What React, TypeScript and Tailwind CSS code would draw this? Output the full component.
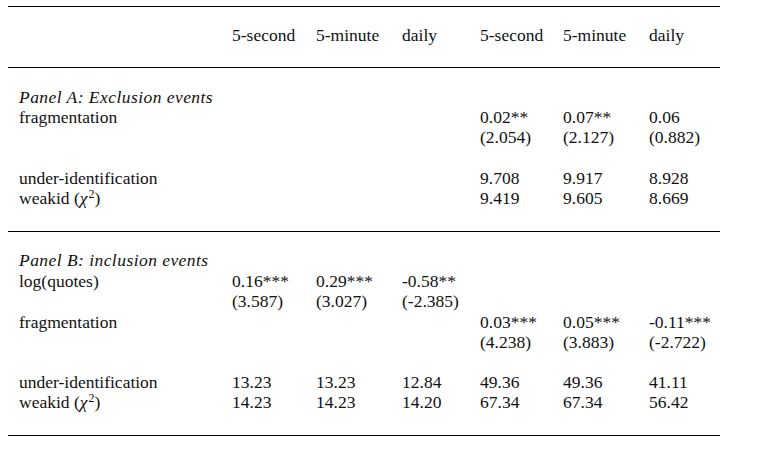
import React from 'react';

const cols = 'grid grid-cols-[224px_84px_86px_78px_83px_86px_71px]';

type RowProps = {
  label?: React.ReactNode;
  cells?: (string | null)[];
  className?: string;
};

function Row({ label, cells = [], className = '' }: RowProps) {
  const filled = [...cells, null, null, null, null, null, null].slice(0, 6);
  return (
    <div className={`${cols} leading-[20px] ${className}`}>
      <div className="pl-[11px] whitespace-nowrap">{label}</div>
      {filled.map((c, i) => (
        <div key={i} className="whitespace-nowrap">
          {c ?? ''}
        </div>
      ))}
    </div>
  );
}

function Rule() {
  return <div className="h-px w-[712px] bg-black" />;
}

function PanelTitle({ children }: { children: React.ReactNode }) {
  return <i className="tracking-[0.45px]">{children}</i>;
}

const weakid = (
  <span className="whitespace-nowrap">
    weakid (<i className="pr-px">χ</i>
    <span className="relative -top-[6px] inline-block text-[12px] leading-none">2</span>)
  </span>
);

export default function App() {
  return (
    <div className="h-[452px] w-[757px] bg-white pl-2 pt-[6px] font-['Liberation_Serif'] text-[17.5px] text-[#111]">
      <Rule />
      <Row
        className="pt-[18px] pb-[22px]"
        cells={['5-second', '5-minute', 'daily', '5-second', '5-minute', 'daily']}
      />
      <Rule />

      <div className="pt-[19px] pb-[23px]">
        <Row label={<PanelTitle>Panel A: Exclusion events</PanelTitle>} />
        <Row label="fragmentation" cells={[null, null, null, '0.02**', '0.07**', '0.06']} />
        <Row cells={[null, null, null, '(2.054)', '(2.127)', '(0.882)']} />
        <Row
          className="mt-[21px]"
          label="under-identification"
          cells={[null, null, null, '9.708', '9.917', '8.928']}
        />
        <Row label={weakid} cells={[null, null, null, '9.419', '9.605', '8.669']} />
      </div>
      <Rule />

      <div className="pt-[18px] pb-[23px]">
        <Row label={<PanelTitle>Panel B: inclusion events</PanelTitle>} />
        <Row className="mt-px" label="log(quotes)" cells={['0.16***', '0.29***', '-0.58**']} />
        <Row cells={['(3.587)', '(3.027)', '(-2.385)']} />
        <Row
          className="mt-px"
          label="fragmentation"
          cells={[null, null, null, '0.03***', '0.05***', '-0.11***']}
        />
        <Row cells={[null, null, null, '(4.238)', '(3.883)', '(-2.722)']} />
        <Row
          className="mt-[20px]"
          label="under-identification"
          cells={['13.23', '13.23', '12.84', '49.36', '49.36', '41.11']}
        />
        <Row label={weakid} cells={['14.23', '14.23', '14.20', '67.34', '67.34', '56.42']} />
      </div>
      <Rule />
    </div>
  );
}
